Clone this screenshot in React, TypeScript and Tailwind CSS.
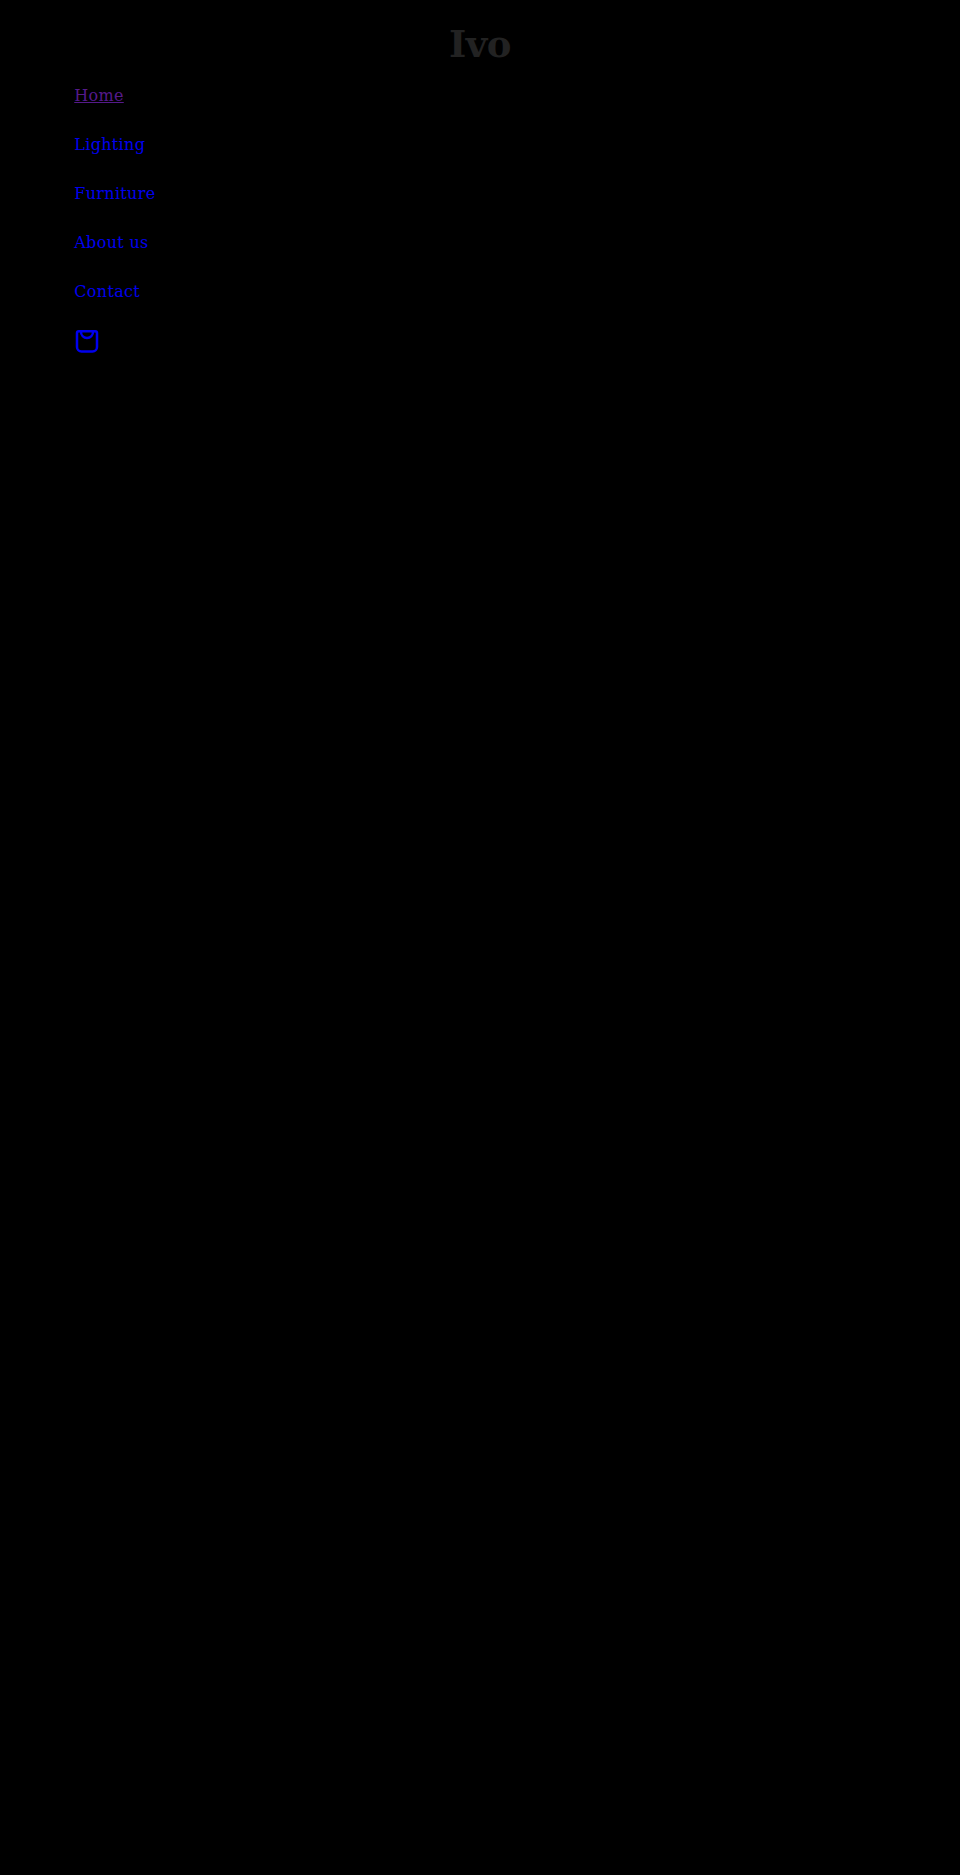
import React from "react";

const links = ["Lighting", "Furniture", "About us", "Contact"];

export default function App(): React.ReactNode {
    return (
        <div className="min-h-[1875px] bg-black font-['DejaVu_Serif',serif] px-[74.25px]">
            <header className="pt-[21px]">
                <h1 className="text-center text-[37px] tracking-[-0.5px] leading-[47px] font-bold text-[#222222]">Ivo</h1>
                <nav className="mt-[15px]">
                    <ul className="flex flex-col gap-[24px] text-[16px] tracking-[0.32px] leading-[25px]">
                        <li>
                            <a href="#" className="text-[#551a8b] underline">Home</a>
                        </li>
                        {links.map((link) => (
                            <li key={link}>
                                <a href="#" className="text-[#0000ee]">{link}</a>
                            </li>
                        ))}
                        <li className="pt-[1px] pl-[0.75px]">
                            <a href="#" className="block w-[24px] text-[#0000ee]">
                                <svg width="24" height="24" viewBox="0 0 24 24" fill="none" stroke="currentColor" strokeWidth="2.5">
                                    <path d="M2 4C2 3 2.700 2.300 3.700 2.300h16.600c1 0 1.700.7 1.700 1.700V18c0 2.500-2 4.500-4.500 4.500H6.500C4 22.500 2 20.500 2 18V4Z" />
                                    <path d="M5.900 2.300c0 4 2.700 6.700 6.100 6.700s6.100-2.700 6.100-6.700" />
                                </svg>
                            </a>
                        </li>
                    </ul>
                </nav>
            </header>
        </div>
    );
}
